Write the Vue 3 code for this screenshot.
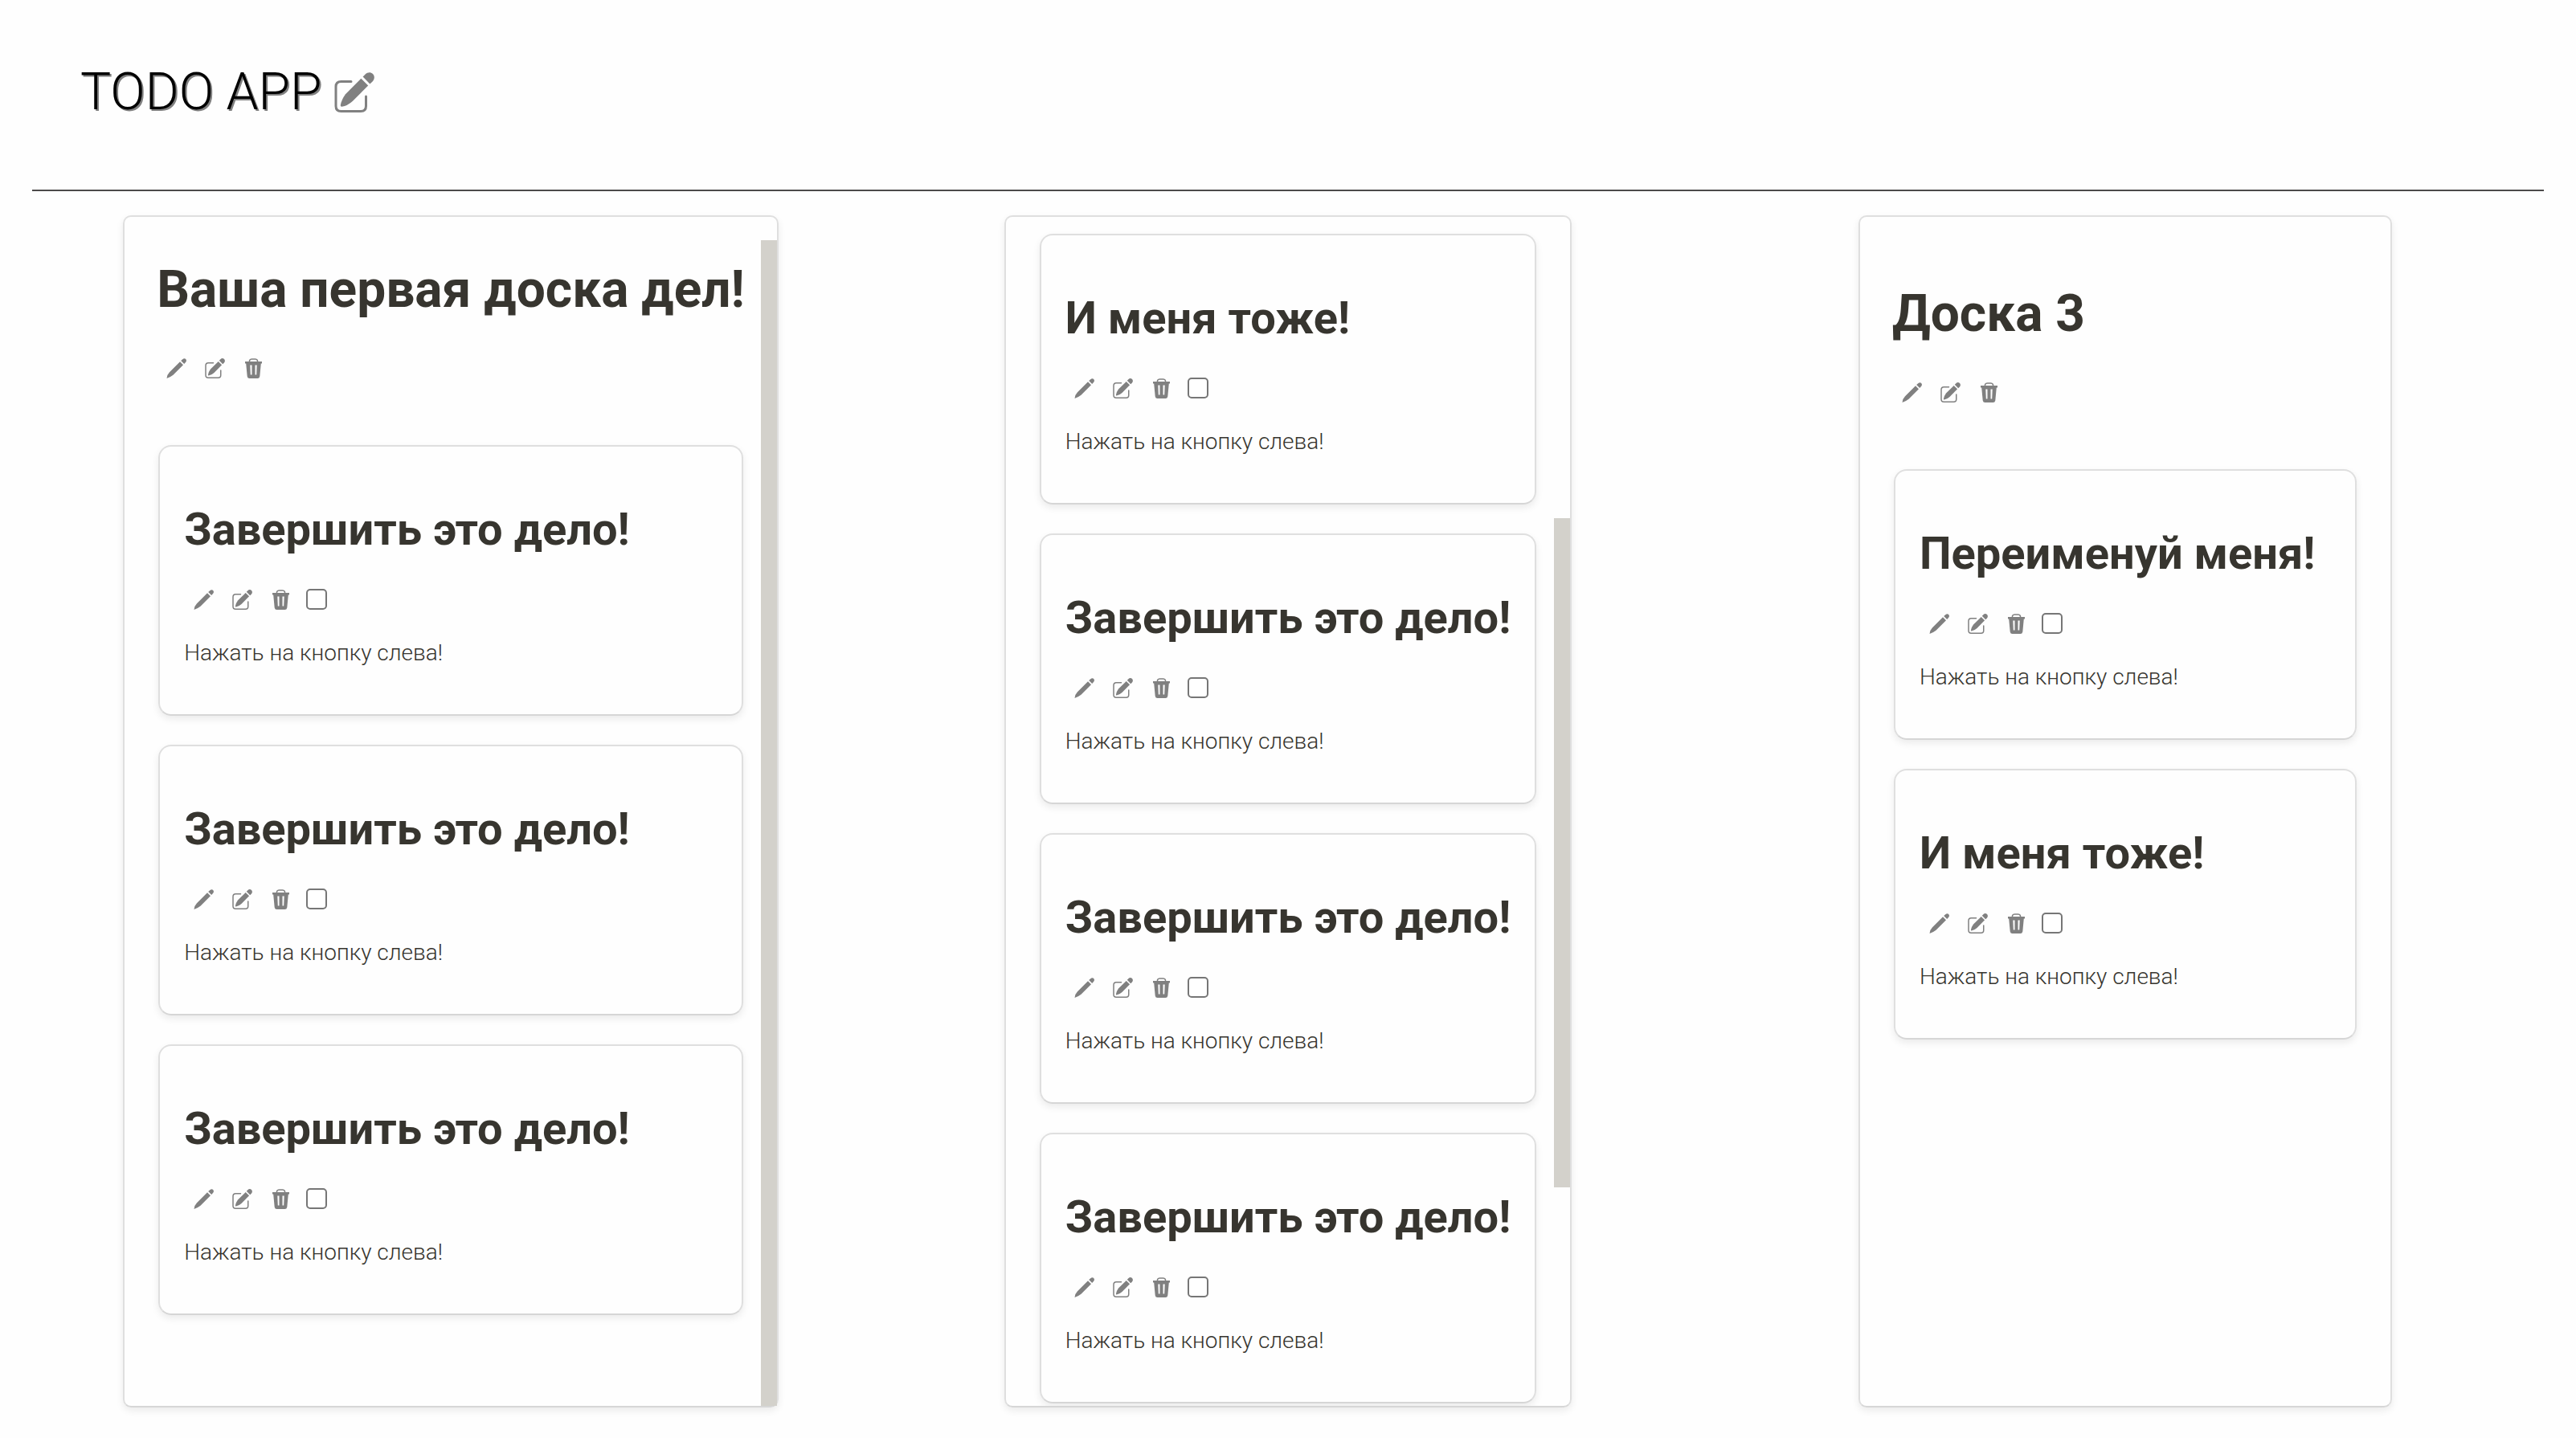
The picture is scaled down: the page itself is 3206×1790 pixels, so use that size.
<script setup>
import { nextTick, onMounted, onBeforeUnmount, reactive, ref } from 'vue'

const note = 'Нажать на кнопку слева!'
const finish = 'Завершить это дело!'

const boards = reactive([
  { id: 1, title: 'Ваша первая доска дел!', offset: 30, tasks: [finish, finish, finish] },
  {
    id: 2,
    title: 'Доска 2',
    offset: 666,
    tasks: ['Переименуй меня!', 'И меня тоже!', finish, finish, finish, finish],
  },
  { id: 3, title: 'Доска 3', offset: 0, tasks: ['Переименуй меня!', 'И меня тоже!'] },
])

const panes = ref([])
const thumbs = reactive([null, null, null])

function measure(i) {
  const el = panes.value[i]
  if (!el) return
  const { clientHeight: view, scrollHeight: full, scrollTop } = el
  thumbs[i] =
    full > view + 1
      ? { top: Math.round((scrollTop / full) * view), height: Math.round((view / full) * view) }
      : null
}

function measureAll() {
  boards.forEach((_, i) => measure(i))
}

onMounted(async () => {
  await nextTick()
  boards.forEach((board, i) => {
    panes.value[i].scrollTop = board.offset
  })
  measureAll()
  window.addEventListener('resize', measureAll)
})
onBeforeUnmount(() => window.removeEventListener('resize', measureAll))
</script>

<template>
  <svg class="sprite" aria-hidden="true">
    <symbol id="icon-pencil" viewBox="0 0 25 25">
      <path d="M17 4.200 21 8.200 8.500 20.700Q4.600 23.800.5 25 .8 20.400 4 17.200Z" />
      <path d="M18.200 3 20.200 1.200C21.500 0 23.200-.1 24.200.9 25.300 2.100 25.200 3.700 24 5L22.200 7Z" />
    </symbol>
    <symbol id="icon-edit" viewBox="0 0 50 50">
      <path
        d="M21 11.500H8.500Q2 11.500 2 18V42Q2 48.500 8.500 48.500H33Q39.500 48.500 39.500 42V30"
        fill="none"
        stroke="currentColor"
        stroke-width="3"
        stroke-linecap="round"
      />
      <path d="M33.400 7.800 42.200 16.600 23 35.800Q16.500 41.800 9.500 42.800 7.600 43 7.800 41 9 34 14 27.200Z" />
      <path d="M35.600 5.600 38.600 2.600C41.400-.4 45.400-.6 48 2 50.600 4.600 50.400 8.600 47.600 11.400L44.400 14.400Z" />
    </symbol>
    <symbol id="icon-trash" viewBox="0 0 22 25">
      <path d="M6 4.500V3Q6.500 1 9 1H13Q15.500 1 16 3V4.500" fill="none" stroke="currentColor" stroke-width="1.500" />
      <path
        fill-rule="evenodd"
        d="M.5 4H21.500V6.500H20.300L18.800 22.500Q18.400 25 16 25H6Q3.600 25 3.200 22.500L1.700 6.500H.5ZM6.800 8.500 7.300 20.500H9V8.500ZM13 8.500V20.500H14.700L15.200 8.500Z"
      />
    </symbol>
  </svg>

  <div class="app">
    <header class="header">
      <h1 class="brand">TODO APP</h1>
      <button class="brand-edit" type="button" aria-label="Редактировать">
        <svg class="icon-large"><use href="#icon-edit" /></svg>
      </button>
    </header>

    <main class="boards">
      <section v-for="(board, i) in boards" :key="board.id" class="board">
        <div ref="panes" class="pane" @scroll="measure(i)">
          <h2 class="board-title">{{ board.title }}</h2>
          <div class="tools">
            <button class="tool" type="button" aria-label="Переименовать">
              <svg class="icon"><use href="#icon-pencil" /></svg>
            </button>
            <button class="tool" type="button" aria-label="Редактировать">
              <svg class="icon"><use href="#icon-edit" /></svg>
            </button>
            <button class="tool" type="button" aria-label="Удалить">
              <svg class="icon"><use href="#icon-trash" /></svg>
            </button>
          </div>
          <div class="cards">
            <article v-for="(task, t) in board.tasks" :key="t" class="card">
              <h3 class="card-title">{{ task }}</h3>
              <div class="tools">
                <button class="tool" type="button" aria-label="Переименовать">
                  <svg class="icon"><use href="#icon-pencil" /></svg>
                </button>
                <button class="tool" type="button" aria-label="Редактировать">
                  <svg class="icon"><use href="#icon-edit" /></svg>
                </button>
                <button class="tool" type="button" aria-label="Удалить">
                  <svg class="icon"><use href="#icon-trash" /></svg>
                </button>
                <input class="check" type="checkbox" :aria-label="task" />
              </div>
              <p class="note">{{ note }}</p>
            </article>
          </div>
        </div>
        <div
          v-if="thumbs[i]"
          class="thumb"
          :style="{ top: thumbs[i].top + 'px', height: thumbs[i].height + 'px' }"
        ></div>
      </section>
    </main>
  </div>
</template>

<style>
body {
  background: #fefefe;
}
</style>

<style scoped>
.sprite {
  position: absolute;
  width: 0;
  height: 0;
}

.app {
  display: flex;
  flex-direction: column;
  box-sizing: border-box;
  height: 100vh;
  padding: 0 40px 38px;
  color: #37352f;
  font-family: Roboto, "Noto Sans", sans-serif;
}

.header {
  display: flex;
  align-items: center;
  gap: 16px;
  padding: 77px 60px 83px;
  border-bottom: 2px solid #4c4a4a;
}

.brand {
  margin: 0;
  color: #000;
  font-size: 64px;
  font-weight: 300;
  line-height: 76px;
  text-shadow: 2px 2px 0 #808080;
}

.brand-edit,
.tool {
  display: flex;
  align-items: center;
  justify-content: center;
  padding: 0;
  border: 0;
  background: none;
  color: #808080;
  cursor: pointer;
}

.icon-large {
  width: 50px;
  height: 50px;
  fill: currentColor;
}

.boards {
  display: grid;
  flex: 1;
  grid-template-columns: repeat(3, 1fr);
  grid-template-rows: minmax(0, 1fr);
  justify-items: center;
  min-height: 0;
  padding-top: 30px;
}

.board {
  position: relative;
  box-sizing: border-box;
  min-width: 664px;
  border: 2px solid #dfdfdf;
  border-bottom-color: #d6d6d6;
  border-radius: 10px;
  box-shadow: 0 4px 10px rgba(0, 0, 0, 0.08);
}

.pane {
  box-sizing: border-box;
  height: 100%;
  overflow-y: auto;
  padding: 40px 40px 77px;
  border-radius: 8px;
  scrollbar-width: none;
}

.thumb {
  position: absolute;
  right: 0;
  width: 20px;
  background: #d3d1cb;
}

.board-title {
  margin: 43px 0 36px;
  font-size: 64px;
  font-weight: 700;
  line-height: 75px;
  white-space: nowrap;
}

.tools {
  display: flex;
  align-items: center;
}

.tool {
  width: 48px;
  height: 48px;
}

.icon {
  width: 25px;
  height: 25px;
  fill: currentColor;
}

.cards {
  margin: 72px 2px 0;
}

.card {
  margin-bottom: 36px;
  padding: 30px;
  border: 2px solid #dfdfdf;
  border-bottom-color: #d6d6d6;
  border-radius: 16px;
  box-shadow: 0 4px 10px rgba(0, 0, 0, 0.08);
}

.card-title {
  margin: 40px 0 30px;
  font-size: 56px;
  font-weight: 700;
  line-height: 66px;
  white-space: nowrap;
}

.check {
  appearance: none;
  width: 26px;
  height: 26px;
  margin: 0 8px;
  border: 2px solid #767676;
  border-radius: 5px;
  background: #fff;
}

.check:checked {
  background: #767676;
}

.note {
  margin: 26px 0 30px;
  font-size: 28px;
  font-weight: 300;
  line-height: 33px;
}
</style>
